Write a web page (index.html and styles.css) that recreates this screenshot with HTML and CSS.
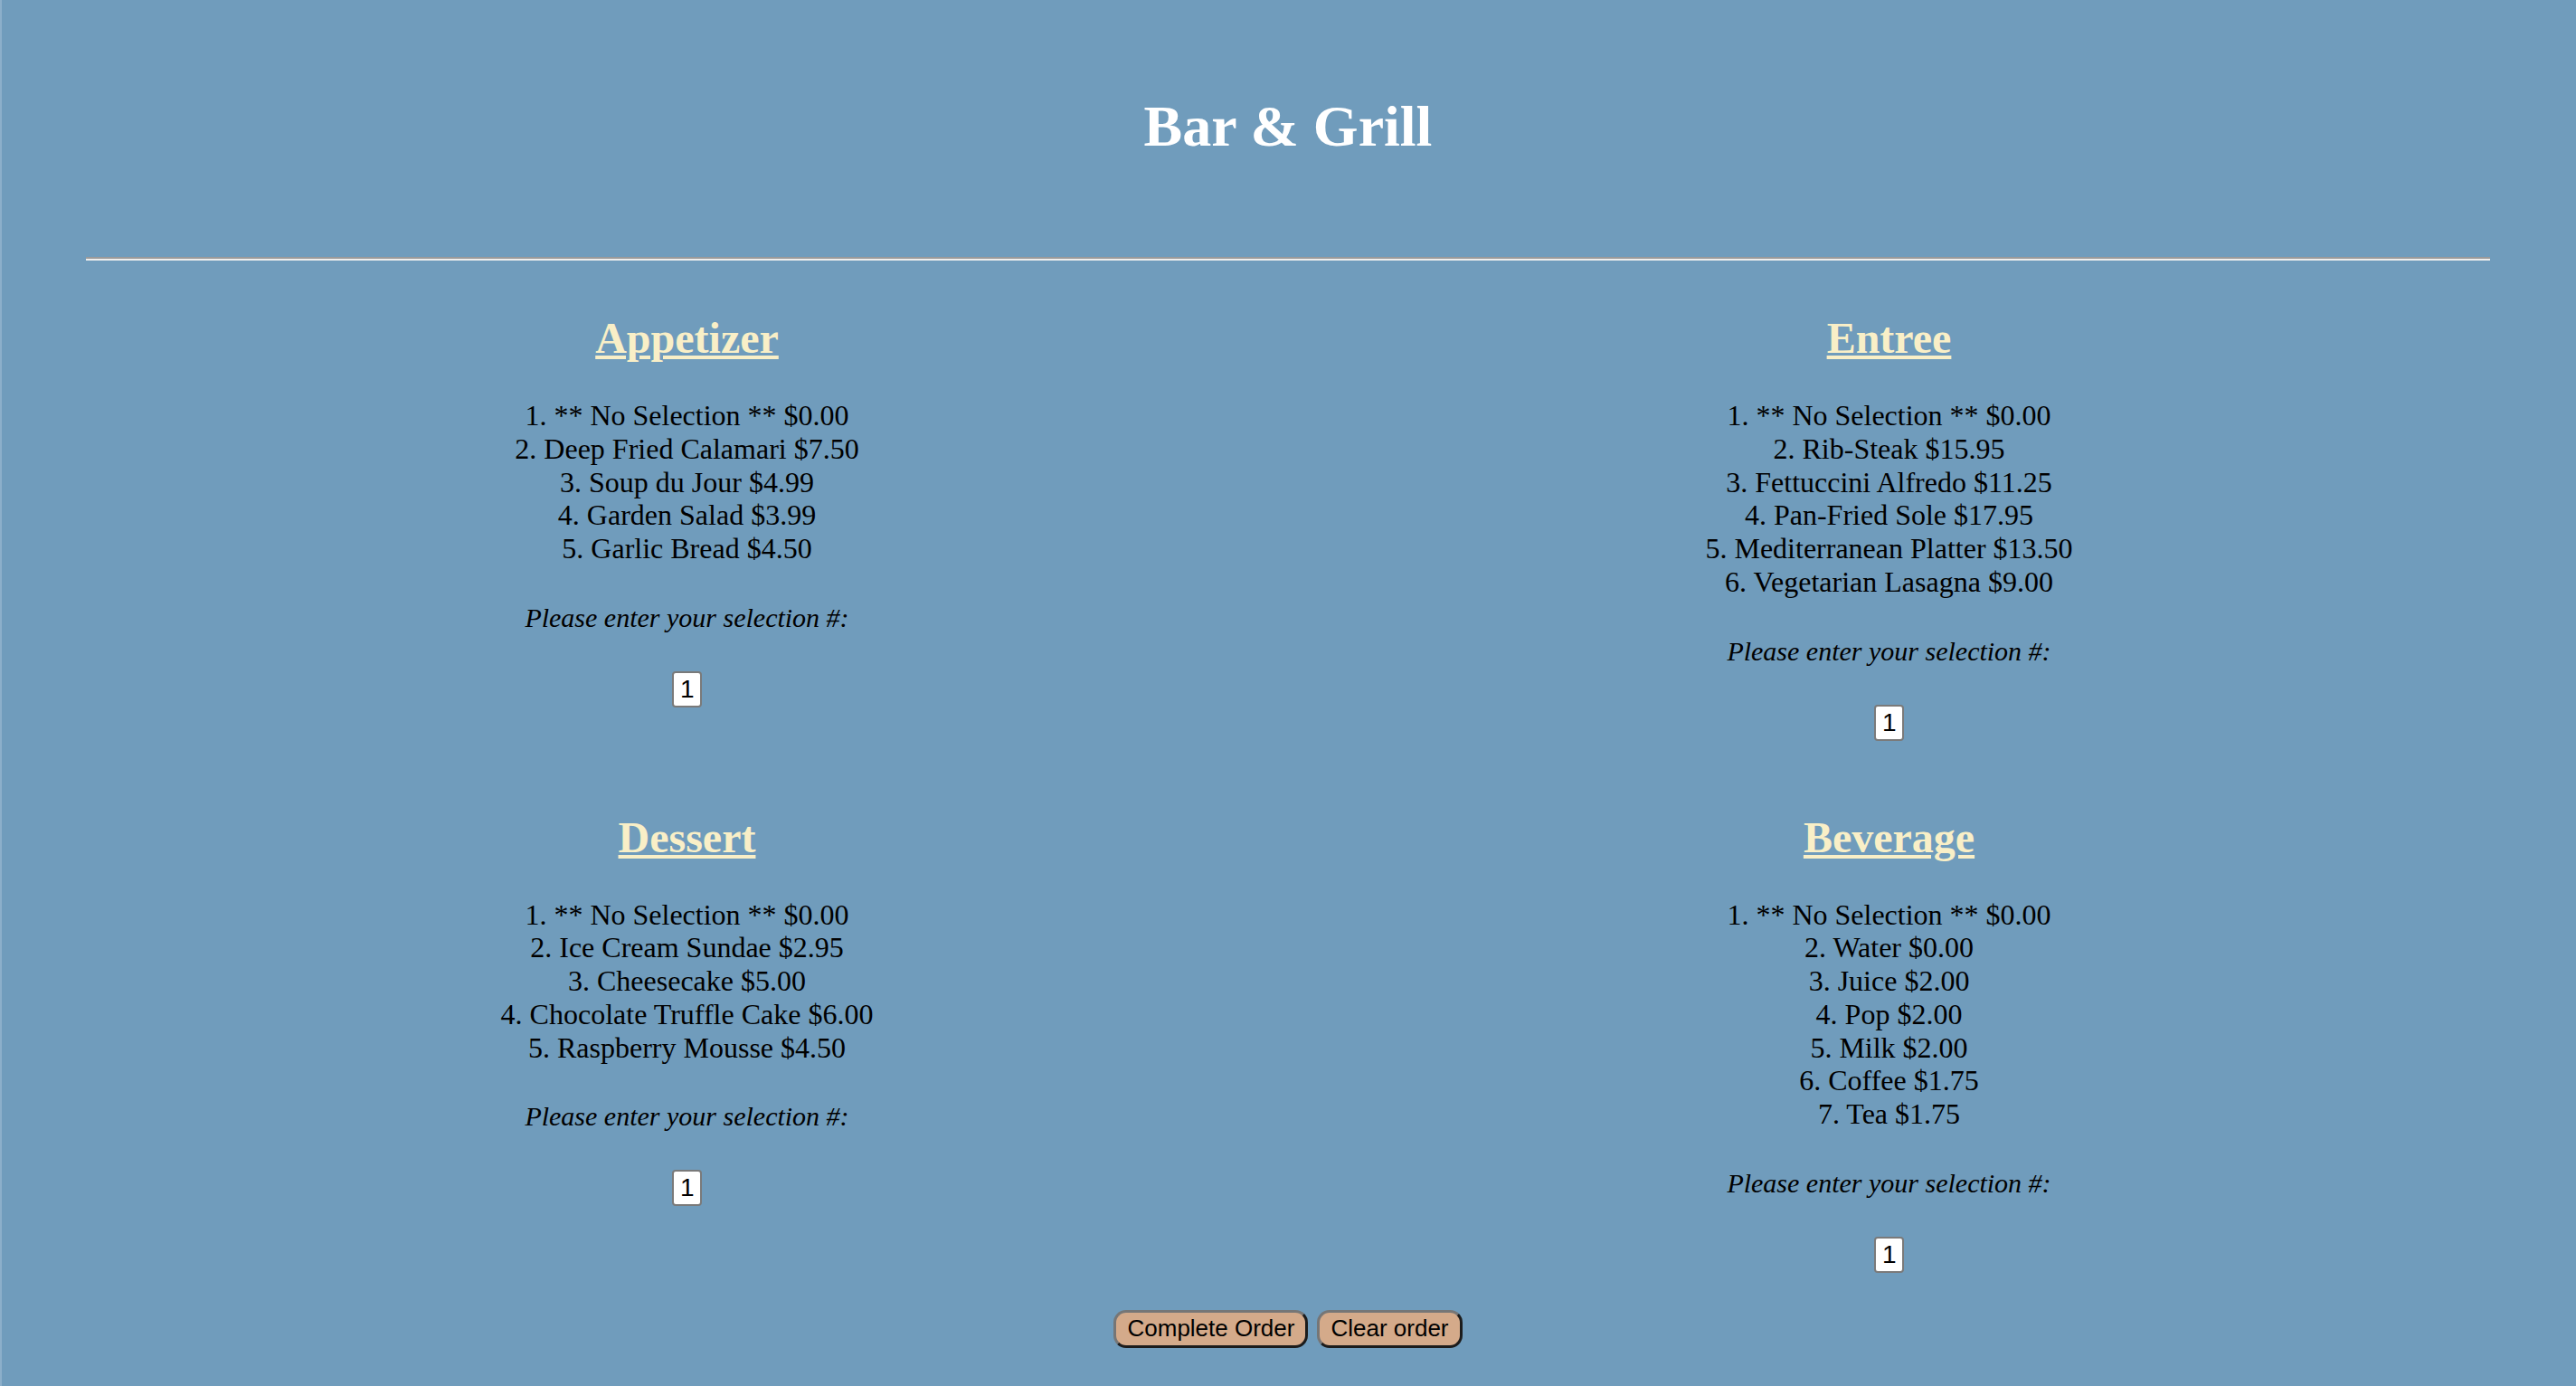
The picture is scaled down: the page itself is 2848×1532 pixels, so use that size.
FILE: index.html
```html
<!DOCTYPE html>
<html lang="en">
<head>
<meta charset="utf-8">
<title>Bar &amp; Grill</title>
<link rel="stylesheet" href="styles.css">
</head>
<body>
  <header class="masthead">
    <h1 class="title">Bar &amp; Grill</h1>
  </header>
  <hr class="rule">
  <main class="menu">
    <section class="course">
      <h2 class="course-title">Appetizer</h2>
      <p class="items">1. ** No Selection ** $0.00<br>2. Deep Fried Calamari $7.50<br>3. Soup du Jour $4.99<br>4. Garden Salad $3.99<br>5. Garlic Bread $4.50</p>
      <p class="prompt">Please enter your selection #:</p>
      <input class="pick" type="text" value="1">
    </section>
    <section class="course">
      <h2 class="course-title">Entree</h2>
      <p class="items">1. ** No Selection ** $0.00<br>2. Rib-Steak $15.95<br>3. Fettuccini Alfredo $11.25<br>4. Pan-Fried Sole $17.95<br>5. Mediterranean Platter $13.50<br>6. Vegetarian Lasagna $9.00</p>
      <p class="prompt">Please enter your selection #:</p>
      <input class="pick" type="text" value="1">
    </section>
    <section class="course">
      <h2 class="course-title">Dessert</h2>
      <p class="items">1. ** No Selection ** $0.00<br>2. Ice Cream Sundae $2.95<br>3. Cheesecake $5.00<br>4. Chocolate Truffle Cake $6.00<br>5. Raspberry Mousse $4.50</p>
      <p class="prompt">Please enter your selection #:</p>
      <input class="pick" type="text" value="1">
    </section>
    <section class="course">
      <h2 class="course-title">Beverage</h2>
      <p class="items">1. ** No Selection ** $0.00<br>2. Water $0.00<br>3. Juice $2.00<br>4. Pop $2.00<br>5. Milk $2.00<br>6. Coffee $1.75<br>7. Tea $1.75</p>
      <p class="prompt">Please enter your selection #:</p>
      <input class="pick" type="text" value="1">
    </section>
  </main>
  <div class="actions">
    <button class="btn" type="button">Complete Order</button>
    <button class="btn" type="button">Clear order</button>
  </div>
</body>
</html>
```
FILE: styles.css
```css
html {
  background: #709cbc;
}

body {
  margin: 0;
  min-height: 100vh;
  padding-top: 103px;
  box-sizing: border-box;
  background: linear-gradient(to right, #8cafca 0, #8cafca 2px, #709cbc 2px);
  font-family: "Liberation Serif", "Times New Roman", serif;
  color: #000;
}

.masthead {
  display: flex;
  justify-content: center;
}

.title {
  margin: 0;
  font-size: 64px;
  line-height: 74px;
  font-weight: bold;
  color: #ffffff;
}

.rule {
  margin: 107px 95px 0 95px;
  height: 0;
  border: 0;
  border-top: 2px solid #9a9a9a;
  border-bottom: 2px solid #eeeeee;
}

.menu {
  margin: 58px 95px 0 95px;
  display: grid;
  grid-template-columns: 1fr 1fr;
  row-gap: 79px;
  align-items: start;
}

.course {
  display: flex;
  flex-direction: column;
  align-items: center;
  text-align: center;
}

.course-title {
  margin: 0;
  font-size: 48px;
  line-height: 55px;
  font-weight: bold;
  color: #f9efc7;
  text-decoration: underline;
  text-decoration-thickness: 4px;
  text-underline-offset: 3px;
}

.items {
  margin: 40px 0 0 0;
  font-size: 32px;
  line-height: 36.75px;
}

.prompt {
  margin: 41px 0 0 0;
  font-size: 30px;
  line-height: 34px;
  font-style: italic;
}

.pick {
  margin: 42px 0 0 0;
  box-sizing: border-box;
  width: 33px;
  height: 40px;
  padding: 0 0 0 7px;
  border: 2px solid #7a7a7a;
  border-radius: 4px;
  background: #ffffff;
  font-family: "Liberation Sans", Arial, sans-serif;
  font-size: 28px;
  color: #000;
}

.actions {
  margin-top: 41px;
  display: flex;
  justify-content: center;
  gap: 10px;
}

.btn {
  box-sizing: border-box;
  height: 42px;
  padding: 0 12px;
  border: 3px solid;
  border-color: #767676 #1c1c1c #1c1c1c #767676;
  border-radius: 14px;
  background: #d4aa8a;
  font-family: "Liberation Sans", Arial, sans-serif;
  font-size: 26px;
  color: #000;
}
```
